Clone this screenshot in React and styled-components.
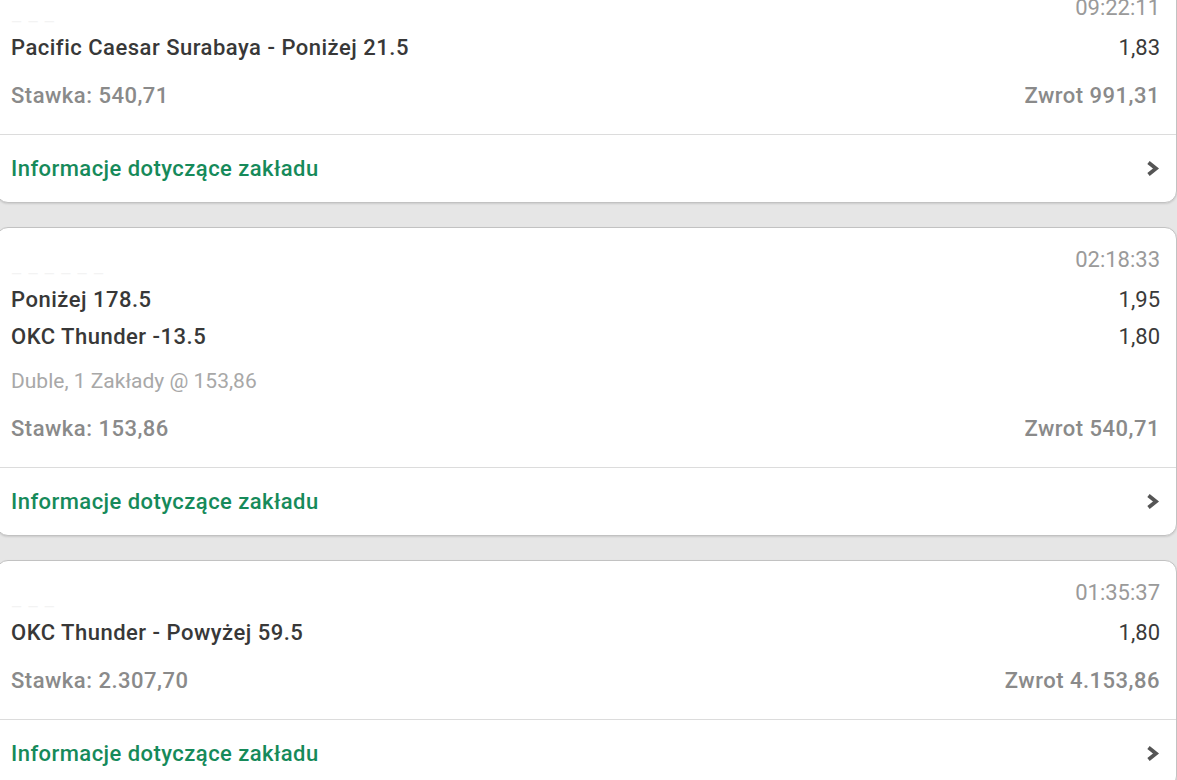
import React from "react";
import styled, { createGlobalStyle } from "styled-components";

const Global = createGlobalStyle`
  html, body { margin: 0; padding: 0; background: #e6e6e6; overflow: hidden; }
  body { font-family: Roboto, "Noto Sans", "Liberation Sans", sans-serif; }
`;

const Page = styled.div`
  display: flex;
  flex-direction: column;
  gap: 24px;
  margin: -25px 0 0 -4px;
  width: 1181px;
`;

const Card = styled.div`
  background: #fff;
  border: 1px solid #c2c2c2;
  border-radius: 12px;
  box-shadow: 0 1px 2px rgba(0, 0, 0, 0.12);
  overflow: hidden;
`;

const Body = styled.div`
  display: flex;
  flex-direction: column;
  padding: 19px 16px 24px 14px;
`;

const HeaderRow = styled.div`
  display: flex;
  justify-content: space-between;
  align-items: flex-end;
  height: 26px;
`;

const Faint = styled.span`
  font-size: 14px;
  line-height: 14px;
  color: #f3f3f3;
  margin-bottom: -8px;
  letter-spacing: 1px;
`;

const Time = styled.span`
  font-size: 22px;
  line-height: 26px;
  color: #9a9a9a;
`;

const Selections = styled.div`
  display: flex;
  flex-direction: column;
  margin-top: 8px;
`;

const Row = styled.div`
  display: flex;
  justify-content: space-between;
  align-items: center;
  height: ${(p) => p.$h || 37}px;
  margin-top: ${(p) => p.$mt || 0}px;
  margin-bottom: ${(p) => p.$mb || 0}px;
`;

const Name = styled.span`
  font-size: 22px;
  font-weight: 500;
  letter-spacing: 0.5px;
  color: #383838;
`;

const Odds = styled.span`
  font-size: 22px;
  color: #3a3a3a;
`;

const Meta = styled.span`
  font-size: 21px;
  color: #a8a8a8;
`;

const Stake = styled.span`
  font-size: 22px;
  font-weight: 500;
  letter-spacing: 0.5px;
  color: #8a8a8a;
`;

const Footer = styled.div`
  display: flex;
  justify-content: space-between;
  align-items: center;
  height: 67px;
  border-top: 1px solid #dcdcdc;
  padding: 0 16px 0 14px;
`;

const InfoLink = styled.span`
  font-size: 22px;
  font-weight: 500;
  letter-spacing: 0.45px;
  color: #168a5a;
`;

const Chevron = () => (
  <svg width="15" height="17" viewBox="0 0 15 17">
    <polyline points="3.5,2.5 11,8.5 3.5,14.5" fill="none" stroke="#555" strokeWidth="3.8" strokeLinejoin="miter" />
  </svg>
);

const bets = [
  {
    time: "09:22:11",
    faint: "— — —",
    sels: [["Pacific Caesar Surabaya - Poniżej 21.5", "1,83"]],
    stake: "Stawka: 540,71",
    ret: "Zwrot 991,31",
  },
  {
    time: "02:18:33",
    faint: "— — — — — —",
    sels: [
      ["Poniżej 178.5", "1,95"],
      ["OKC Thunder -13.5", "1,80"],
    ],
    meta: "Duble, 1 Zakłady @ 153,86",
    stake: "Stawka: 153,86",
    ret: "Zwrot 540,71",
  },
  {
    time: "01:35:37",
    faint: "— — —",
    sels: [["OKC Thunder - Powyżej 59.5", "1,80"]],
    stake: "Stawka: 2.307,70",
    ret: "Zwrot 4.153,86",
  },
];

export default function App() {
  return (
    <>
      <Global />
      <Page>
        {bets.map((b, i) => (
          <Card key={i}>
            <Body>
              <HeaderRow>
                <Faint>{b.faint}</Faint>
                <Time>{b.time}</Time>
              </HeaderRow>
              <Selections>
                {b.sels.map(([n, o], j) => (
                  <Row key={j}>
                    <Name>{n}</Name>
                    <Odds>{o}</Odds>
                  </Row>
                ))}
              </Selections>
              {b.meta && (
                <Row $h={30} $mt={11} $mb={3}>
                  <Meta>{b.meta}</Meta>
                </Row>
              )}
              <Row $h={30} $mt={14}>
                <Stake>{b.stake}</Stake>
                <Stake>{b.ret}</Stake>
              </Row>
            </Body>
            <Footer>
              <InfoLink>Informacje dotyczące zakładu</InfoLink>
              <Chevron />
            </Footer>
          </Card>
        ))}
      </Page>
    </>
  );
}
